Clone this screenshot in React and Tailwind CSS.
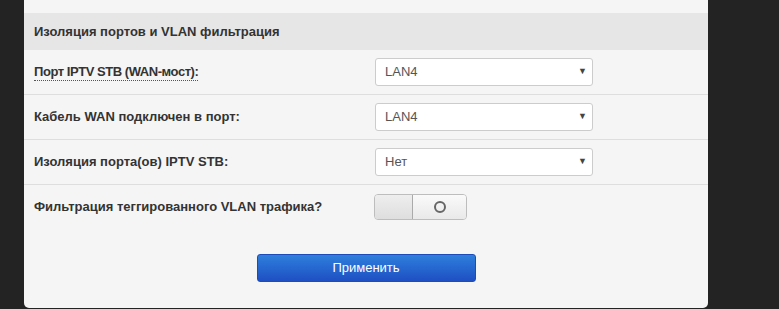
export default function App() {
  const rows = [
    { label: "Порт IPTV STB (WAN-мост):", value: "LAN4", dotted: true },
    { label: "Кабель WAN подключен в порт:", value: "LAN4" },
    { label: "Изоляция порта(ов) IPTV STB:", value: "Нет" },
  ];

  return (
    <div
      className="w-[779px] h-[309px] bg-[#232323] overflow-hidden"
      style={{ fontFamily: '"Liberation Sans", Arial, sans-serif' }}
    >
      <div className="ml-[24px] w-[684px] h-[308px] bg-[#f5f5f5] rounded-b-[5px] flex flex-col">
        <div className="h-[13px]" />

        {/* section header */}
        <div className="h-[37px] bg-[#e6e6e6] flex items-center px-[10px] text-[13px] font-bold text-[#333]">
          Изоляция портов и VLAN фильтрация
        </div>

        {rows.map((row) => (
          <div
            key={row.label}
            className="h-[45px] border-b border-[#dedede] grid grid-cols-[351px_218px] items-center"
          >
            <div className="pl-[10px] text-[13px] font-bold text-[#333]">
              <span
                className={
                  row.dotted
                    ? "tracking-[-0.45px] border-b border-dotted border-[#555] pb-[1px]"
                    : ""
                }
              >
                {row.label}
              </span>
            </div>
            <div className="h-[28px] bg-white border border-[#cccccc] rounded-[3px] flex items-center justify-between pl-[9px] pr-[5px] text-[13px] text-[#555]">
              <span>{row.value}</span>
              <span className="text-[9px] text-[#444]">▼</span>
            </div>
          </div>
        ))}

        {/* toggle row */}
        <div className="h-[45px] grid grid-cols-[350px_93px] items-start pt-[9px]">
          <div className="pl-[10px] pt-[3px] text-[13px] font-bold text-[#333]">
            Фильтрация теггированного VLAN трафика?
          </div>
          <div className="h-[26px] flex border border-[#bdbdbd] rounded-[4px] overflow-hidden">
            <div className="w-[38px] bg-gradient-to-b from-[#eeeeee] to-[#dedede] border-r border-[#aaaaaa]" />
            <div className="flex-1 bg-gradient-to-b from-[#fafafa] to-[#e9e9e9] flex items-center justify-center">
              <span className="w-[12px] h-[12px] rounded-full border-2 border-[#666]" />
            </div>
          </div>
        </div>

        <div className="flex justify-center pt-[24px]">
          <button className="w-[219px] h-[28px] rounded-[3px] bg-gradient-to-b from-[#2f7fdc] to-[#1f4fc3] border border-[#1d4cb8] text-white text-[13px]">
            Применить
          </button>
        </div>
      </div>
    </div>
  );
}
